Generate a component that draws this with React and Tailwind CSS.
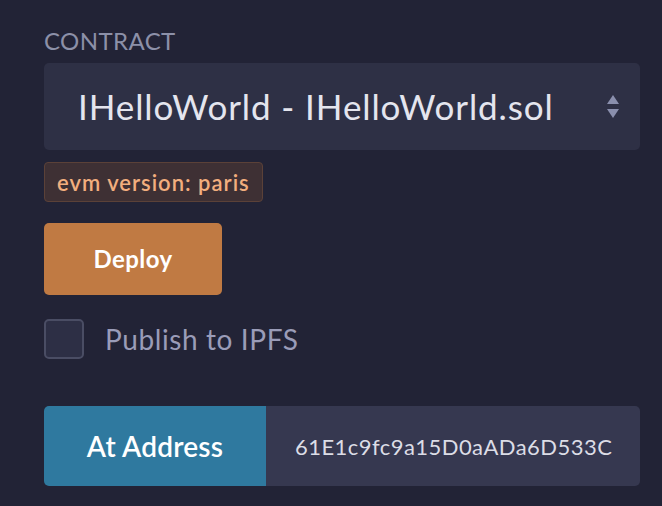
export default function App() {
  return (
    <div className="w-[662px] h-[506px] bg-[#222336] overflow-hidden" style={{ fontFamily: "Lato, 'Noto Sans', sans-serif" }}>
      <div className="pl-[44px] pr-[22px] pt-[28px] flex flex-col">
        <div className="text-[24px] leading-[26px] text-[#8c90a8] tracking-[0.4px]">CONTRACT</div>
        <div className="mt-[9px] h-[87px] bg-[#2e3045] rounded-[5px] flex items-center pl-[34px] pr-[20px]">
          <span className="flex-1 text-[35px] text-[#e4e5ee] tracking-[0.9px]">IHelloWorld - IHelloWorld.sol</span>
          <svg width="14" height="26" viewBox="0 0 14 26">
            <path d="M7 1 L13 10 L1 10 Z" fill="#8a8fad" />
            <path d="M1 15 L13 15 L7 24 Z" fill="#8a8fad" />
          </svg>
        </div>
        <div className="mt-[12px] self-start h-[40px] px-[12px] flex items-center rounded-[4px] bg-[#3e3034] border border-[#5b4138] text-[#f2ae7e] text-[22px] font-semibold tracking-[1px]">evm version: paris</div>
        <button className="mt-[21px] self-start w-[178px] h-[72px] rounded-[5px] bg-[#c07a43] text-white text-[24px] font-bold tracking-[0.4px]">Deploy</button>
        <div className="mt-[24px] h-[40px] flex items-center">
          <div className="w-[40px] h-[40px] rounded-[5px] border-2 border-[#4a4d64] bg-[#2d2f45]" />
          <span className="ml-[21px] text-[28px] leading-[40px] text-[#9a9cb8] tracking-[0.6px]">Publish to IPFS</span>
        </div>
        <div className="mt-[47px] flex h-[80px] rounded-[5px] overflow-hidden">
          <div className="w-[222px] bg-[#2f799f] flex items-center justify-center text-white text-[28px] font-semibold tracking-[0.2px]">At Address</div>
          <div className="flex-1 bg-[#363850] flex items-center pl-[29px] text-[22px] text-[#dcdde6] tracking-[0.45px]">61E1c9fc9a15D0aADa6D533C</div>
        </div>
      </div>
    </div>
  );
}
